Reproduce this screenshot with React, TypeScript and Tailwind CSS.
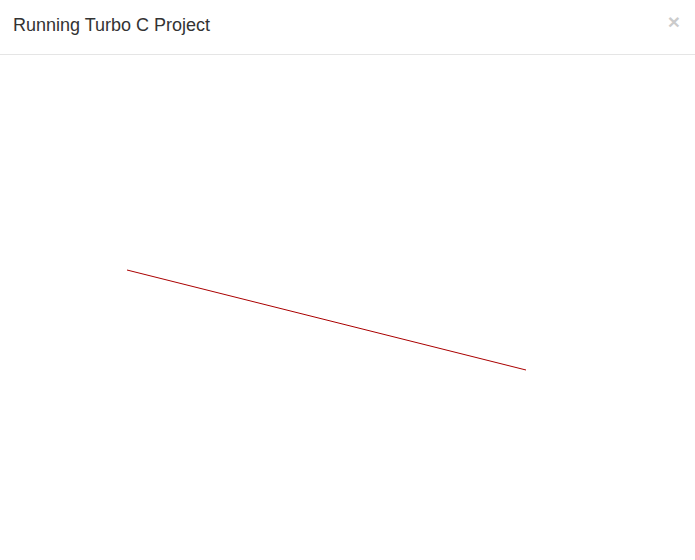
export default function App() {
  return (
    <div className="w-[695px] h-[560px] bg-white flex flex-col" style={{ fontFamily: '"Liberation Sans", Arial, sans-serif' }}>
      <div className="relative h-[55px] border-b border-[#e5e5e5] flex items-center px-[13px] shrink-0">
        <h4 className="text-[18px] leading-[26px] text-[#333] m-0 pb-[4px]">Running Turbo C Project</h4>
        <span className="absolute right-[15px] top-[11px] text-[21px] font-bold leading-[21px] text-[#000] opacity-20">×</span>
      </div>
      <div className="flex-1">
        <svg width="695" height="505" viewBox="0 55 695 505" className="block">
          <line x1="127" y1="270" x2="526" y2="370" stroke="#aa0000" strokeWidth="1" />
        </svg>
      </div>
    </div>
  );
}
